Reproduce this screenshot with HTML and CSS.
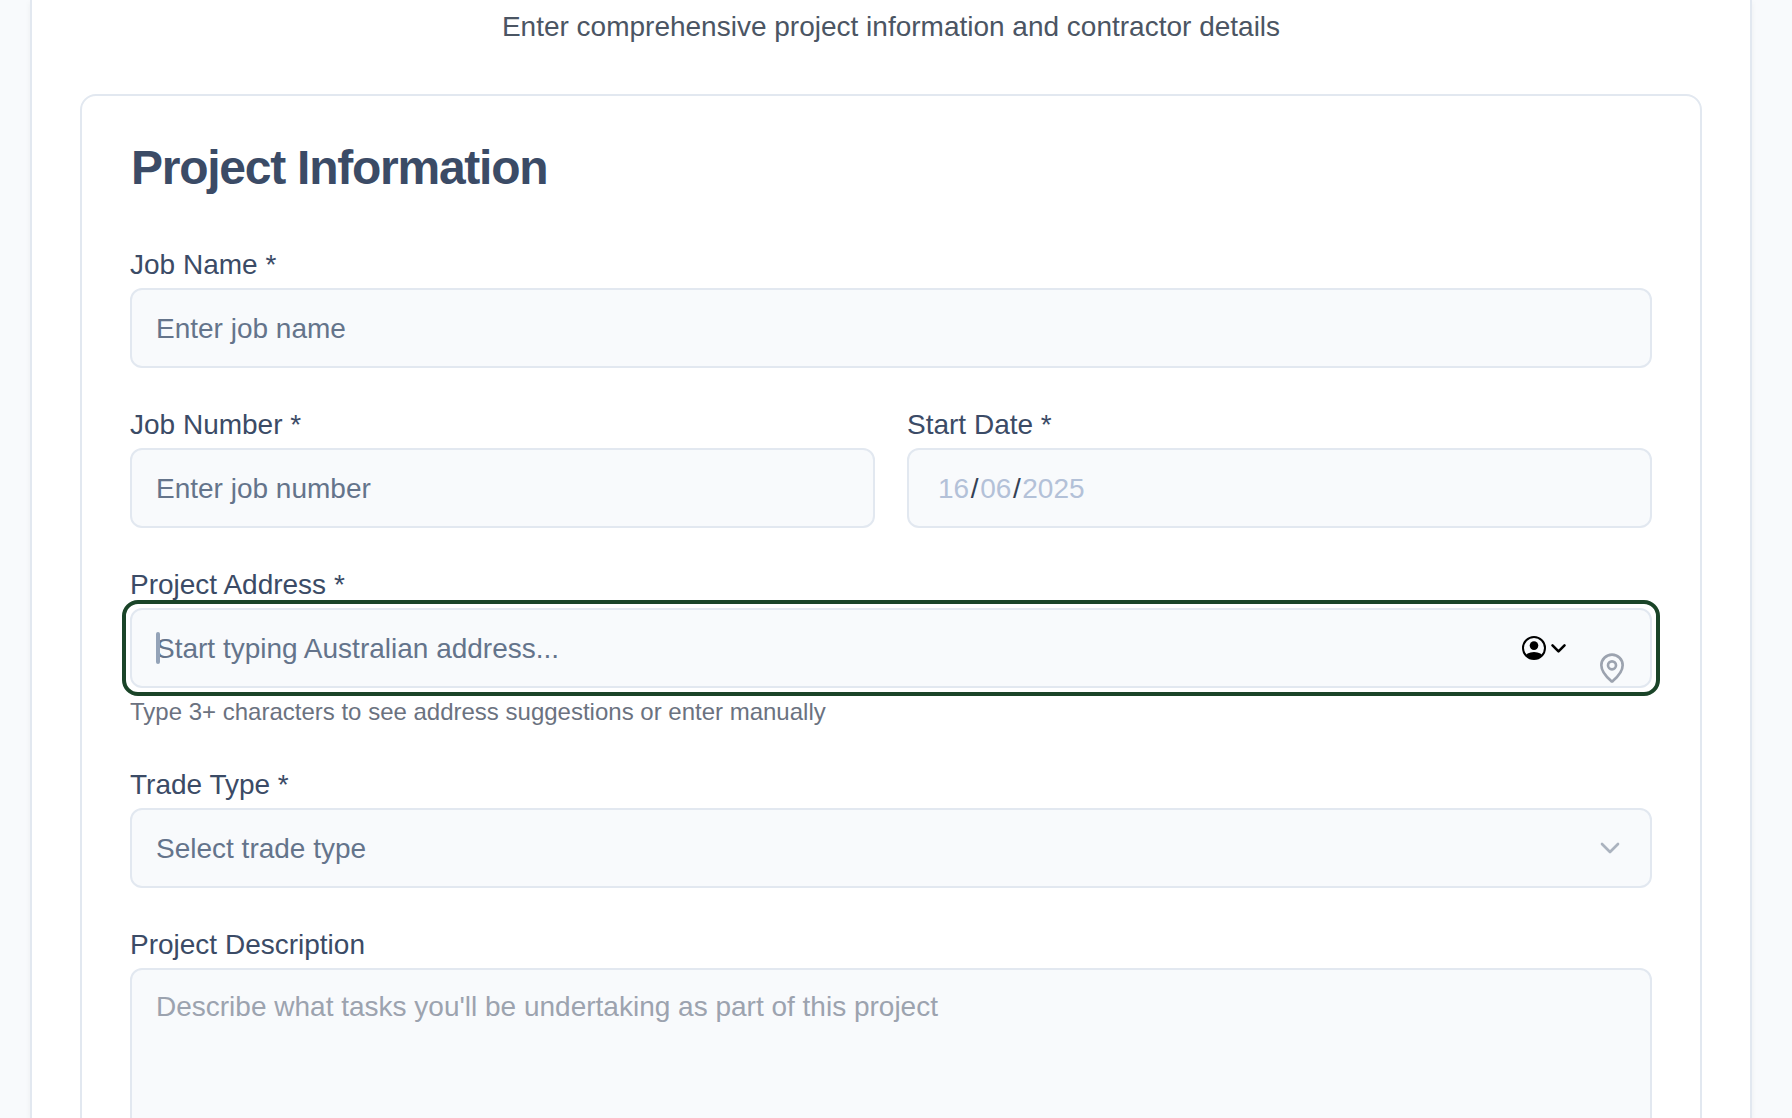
FILE: index.html
```html
<!DOCTYPE html>
<html lang="en">
<head>
<meta charset="utf-8">
<title>Project Information</title>
<link rel="stylesheet" href="styles.css">
</head>
<body>
<main class="panel">
  <p class="subtitle"><span>Enter comprehensive project information and contractor details</span></p>
  <section class="card">
    <h2 class="title"><span>Project Information</span></h2>
    <div class="field">
      <label class="label"><span>Job Name *</span></label>
      <div class="input"><span>Enter job name</span></div>
    </div>
    <div class="row">
      <div class="field">
        <label class="label"><span>Job Number *</span></label>
        <div class="input"><span>Enter job number</span></div>
      </div>
      <div class="field">
        <label class="label"><span>Start Date *</span></label>
        <div class="input date"><span>16</span><span class="slash">/</span><span>06</span><span class="slash">/</span><span>2025</span></div>
      </div>
    </div>
    <div class="field">
      <label class="label"><span>Project Address *</span></label>
      <div class="input focused">
        <i class="caret"></i>
        <span>Start typing Australian address...</span>
        <svg class="contact" viewBox="0 0 46 24">
          <defs><clipPath id="face"><circle cx="12" cy="12" r="11"/></clipPath></defs>
          <circle cx="12" cy="12" r="11" fill="none" stroke="#000" stroke-width="2"/>
          <circle cx="12" cy="9.6" r="4.3"/>
          <ellipse cx="12" cy="21.5" rx="9" ry="5.5" clip-path="url(#face)"/>
          <path d="M30.500 9.300l6 6 6-6" fill="none" stroke="#000" stroke-width="2.600" stroke-linecap="round" stroke-linejoin="round"/>
        </svg>
        <svg class="pin" viewBox="0 0 24 24">
          <path d="M20 10c0 4.993-5.539 10.193-7.399 11.799a1 1 0 0 1-1.202 0C9.539 20.193 4 14.993 4 10a8 8 0 0 1 16 0"/>
          <circle cx="12" cy="10" r="3"/>
        </svg>
      </div>
      <p class="hint"><span>Type 3+ characters to see address suggestions or enter manually</span></p>
    </div>
    <div class="field">
      <label class="label"><span>Trade Type *</span></label>
      <div class="input select"><span>Select trade type</span>
        <svg class="chevron" viewBox="0 0 24 24"><path d="m6 9 6 6 6-6"/></svg>
      </div>
    </div>
    <div class="field">
      <label class="label"><span>Project Description</span></label>
      <div class="input area"><span>Describe what tasks you'll be undertaking as part of this project</span></div>
    </div>
  </section>
</main>
</body>
</html>
```
FILE: styles.css
```css
* { box-sizing: border-box; }
html, body { height: 100%; }
body {
  margin: 0;
  padding: 0 40px 0 30px;
  overflow: hidden;
  background: #f8fafc;
  color: #3b4b66;
  font: 28px/30px "Liberation Sans", Arial, sans-serif;
}
.panel {
  height: 1118px;
  overflow: hidden;
  padding: 0 48px;
  background: #fff;
  border: solid #e2e8f0;
  border-width: 0 2px;
  box-shadow: 0 2px 6px rgba(15, 23, 42, .05);
}
.subtitle {
  height: 94px;
  margin: 0;
  padding-top: 12px;
  text-align: center;
  color: #4b5563;
}
.card {
  display: flex;
  flex-direction: column;
  gap: 42px;
  height: 1200px;
  padding: 48px 48px 0;
  border: 2px solid #e2e8f0;
  border-radius: 16px;
}
.title {
  margin: 0 0 16px;
  padding-left: 1px;
  font-size: 48px;
  line-height: 48px;
  letter-spacing: -1.25px;
}
.row {
  display: grid;
  grid-template-columns: 1fr 1fr;
  gap: 32px;
}
.label { display: block; height: 38px; }
.input {
  position: relative;
  display: flex;
  align-items: center;
  height: 80px;
  padding: 2px 24px 0;
  border: 2px solid #e2e8f0;
  border-radius: 12px;
  background: #f8fafc;
  color: #64748b;
}
.date { padding-left: 29px; color: #b3c1d8; }
.slash { color: #334155; padding: 0 1.6px; }
.focused::after {
  content: "";
  position: absolute;
  inset: -10px;
  border: 4px solid #1a4428;
  border-radius: 16px;
}
.caret {
  position: absolute;
  left: 24px;
  top: 22px;
  width: 4px;
  height: 32px;
  border-radius: 2px;
  background: #94a3b8;
}
.contact {
  position: absolute;
  left: 1390px;
  top: 26px;
  width: 46px;
  height: 24px;
}
.pin {
  position: absolute;
  right: 22px;
  top: 42px;
  width: 32px;
  height: 32px;
}
.pin, .chevron {
  fill: none;
  stroke: #9ca3af;
  stroke-width: 2;
  stroke-linecap: round;
  stroke-linejoin: round;
}
.select { justify-content: space-between; }
.chevron { width: 32px; height: 32px; margin-top: -2px; stroke: #abb3bf; }
.hint {
  height: 40px;
  margin: 0;
  padding-top: 8px;
  font-size: 24px;
  line-height: 32px;
  color: #6b7280;
}
.area {
  align-items: flex-start;
  height: 260px;
  padding-top: 22px;
  color: #9ca3af;
}
```
